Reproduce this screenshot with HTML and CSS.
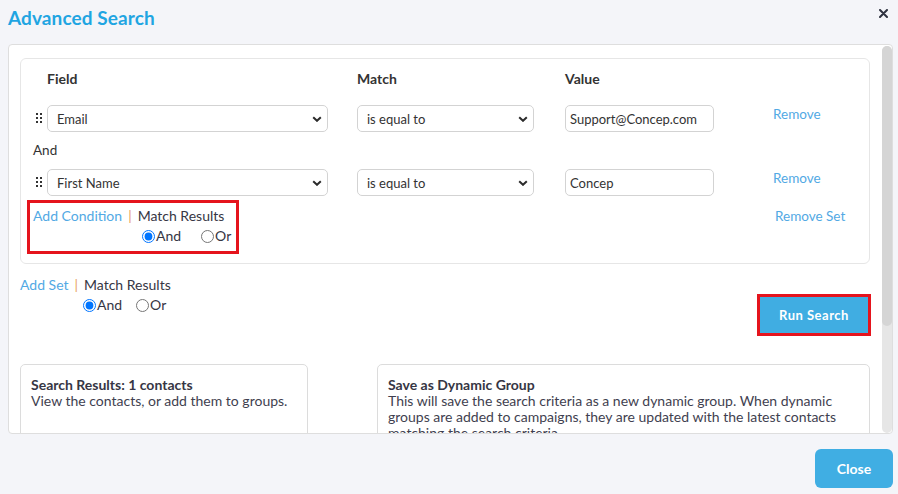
FILE: index.html
```html
<!DOCTYPE html>
<html lang="en">
<head>
<meta charset="utf-8">
<title>Advanced Search</title>
<link rel="stylesheet" href="styles.css">
</head>
<body>
<div class="modal">
  <div class="modal-header">
    <h1 class="modal-title">Advanced Search</h1>
    <button class="icon-close" aria-label="Close">
      <svg width="9" height="9" viewBox="0 0 9 9"><path d="M1 1 L8 8 M8 1 L1 8" stroke="#2f3340" stroke-width="2" stroke-linecap="round"/></svg>
    </button>
  </div>

  <div class="panel">
    <div class="panel-content">
      <div class="set-box">
        <div class="row head-row">
          <span></span>
          <span class="col-head">Field</span>
          <span class="col-head">Match</span>
          <span class="col-head">Value</span>
          <span></span>
        </div>

        <div class="row cond-row">
          <span class="handle"><svg width="6" height="10" viewBox="0 0 6 10"><g fill="#333"><rect x="0" y="0" width="2" height="2"/><rect x="4" y="0" width="2" height="2"/><rect x="0" y="4" width="2" height="2"/><rect x="4" y="4" width="2" height="2"/><rect x="0" y="8" width="2" height="2"/><rect x="4" y="8" width="2" height="2"/></g></svg></span>
          <div class="select sel-field"><span>Email</span><svg class="chev" width="10" height="6" viewBox="0 0 10 6"><path d="M1.2 1.2 L5 4.8 L8.8 1.2" fill="none" stroke="#2b2b2b" stroke-width="2"/></svg></div>
          <div class="select sel-match"><span>is equal to</span><svg class="chev" width="10" height="6" viewBox="0 0 10 6"><path d="M1.2 1.2 L5 4.8 L8.8 1.2" fill="none" stroke="#2b2b2b" stroke-width="2"/></svg></div>
          <div class="input">Support@Concep.com</div>
          <a class="link remove">Remove</a>
        </div>

        <div class="and-label">And</div>

        <div class="row cond-row">
          <span class="handle"><svg width="6" height="10" viewBox="0 0 6 10"><g fill="#333"><rect x="0" y="0" width="2" height="2"/><rect x="4" y="0" width="2" height="2"/><rect x="0" y="4" width="2" height="2"/><rect x="4" y="4" width="2" height="2"/><rect x="0" y="8" width="2" height="2"/><rect x="4" y="8" width="2" height="2"/></g></svg></span>
          <div class="select sel-field"><span>First Name</span><svg class="chev" width="10" height="6" viewBox="0 0 10 6"><path d="M1.2 1.2 L5 4.8 L8.8 1.2" fill="none" stroke="#2b2b2b" stroke-width="2"/></svg></div>
          <div class="select sel-match"><span>is equal to</span><svg class="chev" width="10" height="6" viewBox="0 0 10 6"><path d="M1.2 1.2 L5 4.8 L8.8 1.2" fill="none" stroke="#2b2b2b" stroke-width="2"/></svg></div>
          <div class="input">Concep</div>
          <a class="link remove">Remove</a>
        </div>

        <div class="row actions-row">
          <div class="match-block highlight">
            <div class="match-line"><a class="link">Add Condition</a><span class="sep">|</span><span>Match Results</span></div>
            <div class="radio-line inner-radios">
              <label class="radio"><input type="radio" name="cond" checked>And</label>
              <label class="radio"><input type="radio" name="cond">Or</label>
            </div>
          </div>
          <a class="link remove-set">Remove Set</a>
        </div>
      </div>

      <div class="set-actions">
        <div class="match-block">
          <div class="match-line"><a class="link">Add Set</a><span class="sep">|</span><span>Match Results</span></div>
          <div class="radio-line outer-radios">
            <label class="radio"><input type="radio" name="set" checked>And</label>
            <label class="radio"><input type="radio" name="set">Or</label>
          </div>
        </div>
        <button class="btn run-btn highlight-btn">Run Search</button>
      </div>

      <div class="cards">
        <div class="card">
          <div class="card-title">Search Results: 1 contacts</div>
          <p class="card-text">View the contacts, or add them to groups.</p>
        </div>
        <div class="card">
          <div class="card-title">Save as Dynamic Group</div>
          <p class="card-text">This will save the search criteria as a new dynamic group. When dynamic groups are added to campaigns, they are updated with the latest contacts matching the search criteria.</p>
        </div>
      </div>
    </div>
    <div class="scrollbar"><div class="scroll-thumb"></div></div>
  </div>

  <div class="modal-footer">
    <button class="btn close-btn">Close</button>
  </div>
</div>
</body>
</html>
```

FILE: styles.css
```css
* { box-sizing: border-box; }

html, body {
  margin: 0;
  padding: 0;
  background: #f4f5f9;
  font-family: Lato, "Open Sans", "Liberation Sans", sans-serif;
  font-size: 14px;
  color: #363644;
}

.modal {
  width: 898px;
  height: 494px;
  padding: 0 5px 0 8px;
  overflow: hidden;
}

.modal-header {
  height: 44px;
  display: flex;
  justify-content: space-between;
  align-items: flex-start;
}

.modal-title {
  margin: 0;
  padding-top: 6px;
  font-size: 19px;
  line-height: 24px;
  font-weight: 700;
  letter-spacing: 0.1px;
  color: #1fa5e2;
}

.icon-close {
  border: 0;
  background: none;
  padding: 0;
  margin: 9px 5px 0 0;
  width: 9px;
  height: 9px;
  display: flex;
}

.panel {
  height: 390px;
  background: #fff;
  border: 1px solid #dedede;
  border-radius: 4px;
  display: flex;
  overflow: hidden;
}

.panel-content {
  flex: 1;
  min-width: 0;
  overflow: hidden;
  padding: 13px 12px 14px 11px;
}

.scrollbar {
  width: 10px;
  flex: none;
  margin: 1px 0 0 0;
  background: #e6e6e6;
  border-radius: 5px;
}

.scroll-thumb {
  height: 280px;
  background: #d5d5d5;
  border-radius: 5px;
}

.set-box {
  border: 1px solid #e6e6e6;
  border-radius: 6px;
  padding: 10px 12px 15px 12px;
}

.row {
  display: grid;
  grid-template-columns: 14px 310px 208px 208px 1fr;
}

.col-head {
  font-size: 14px;
  line-height: 20px;
  font-weight: 700;
  color: #333;
}

.cond-row { margin-top: 16px; align-items: start; }
.cond-row + .and-label + .cond-row { margin-top: 10px; }

.handle {
  display: flex;
  padding: 8px 0 0 3px;
}

.select, .input {
  height: 27px;
  border: 1px solid #d3d3d3;
  border-radius: 5px;
  background: #fff;
  display: flex;
  align-items: center;
  color: #333;
  font-size: 13px;
  line-height: 18px;
}

.select {
  justify-content: space-between;
  padding: 0 5px 0 9px;
}

.chev { display: block; }

.sel-field { width: 281px; }
.sel-match { width: 177px; }
.input { width: 149px; padding: 0 4px; }

.link {
  color: #52a9e4;
  text-decoration: none;
  cursor: pointer;
}

.remove { font-size: 13.5px; line-height: 18px; }

.and-label {
  margin-top: 9px;
  line-height: 18px;
  font-size: 13.5px;
  color: #333;
}

.actions-row { margin-top: 10px; align-items: start; }

.match-block {
  line-height: 20px;
  color: #363644;
}

.highlight {
  grid-column: 1 / 5;
  justify-self: start;
  outline: 3px solid #e5141d;
  outline-offset: 3px;
  padding: 0 2px 2px 0;
}

.remove-set {
  font-size: 13.5px;
  line-height: 20px;
  margin-left: 2px;
}

.sep {
  color: #e8a262;
  margin: 0 6px;
}

.radio-line {
  display: flex;
  align-items: center;
  height: 20px;
}

.radio {
  display: flex;
  align-items: center;
}

.radio input {
  margin: 0 1px 0 0;
  width: 13px;
  height: 13px;
}

.inner-radios { margin-left: 109px; }
.inner-radios .radio + .radio { margin-left: 20px; }

.outer-radios { margin-left: 63px; }
.outer-radios .radio + .radio { margin-left: 14px; }

.set-actions {
  display: flex;
  justify-content: space-between;
  align-items: flex-start;
  margin-top: 11px;
}

.btn {
  font-family: Lato, "Open Sans", "Liberation Sans", sans-serif;
  font-weight: 700;
  color: #fff;
  border: 0;
  cursor: pointer;
}

.run-btn {
  margin: 22px 2px 0 0;
  width: 108px;
  height: 36px;
  background: #40ade2;
  font-size: 13px;
  letter-spacing: 0.5px;
}

.highlight-btn {
  outline: 3px solid #e5141d;
  outline-offset: 0;
}

.cards {
  display: grid;
  grid-template-columns: 288px 1fr;
  column-gap: 69px;
  margin-top: 31px;
}

.card {
  border: 1px solid #dcdcdc;
  border-radius: 5px;
  padding: 11px 10px;
  min-height: 186px;
}

.card-title {
  font-weight: 700;
  line-height: 17px;
  color: #363644;
}

.card-text {
  margin: 0;
  line-height: 16px;
  color: #3f3f50;
}

.modal-footer {
  display: flex;
  justify-content: flex-end;
  padding-top: 15px;
}

.close-btn {
  width: 78px;
  height: 39px;
  border-radius: 6px;
  background: #40aee3;
  font-size: 14px;
}
```
